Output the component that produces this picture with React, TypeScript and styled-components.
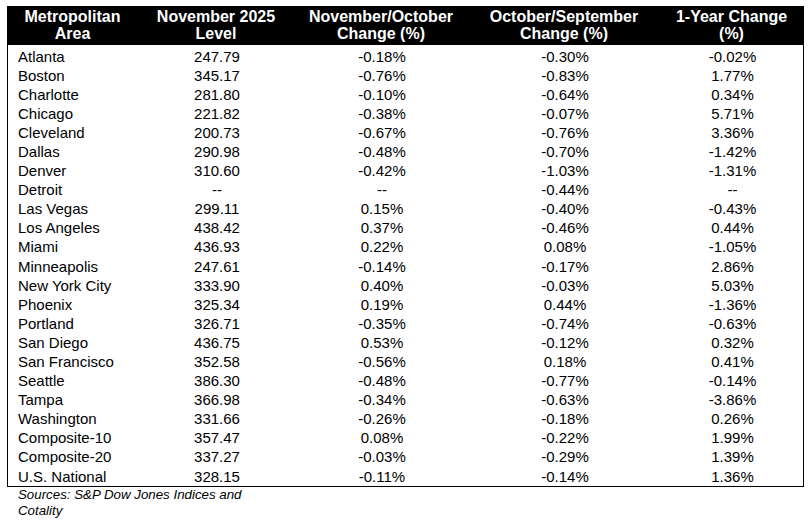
import styled, { createGlobalStyle } from "styled-components";

const GlobalStyle = createGlobalStyle`
  html, body {
    margin: 0;
    padding: 0;
    background: #fff;
  }
  body {
    font-family: "Liberation Sans", Arial, sans-serif;
    color: #000;
  }
`;

const COLUMNS = "131px 156px 174px 192px 143px";

const Page = styled.div`
  padding: 6px 0 0 7px;
  width: 797px;
`;

const HeaderRow = styled.div`
  display: grid;
  grid-template-columns: ${COLUMNS};
  background: #000;
  color: #fff;
  padding: 2px 0 3px;
`;

const HeaderCell = styled.div`
  font-size: 16px;
  font-weight: 700;
  line-height: 17px;
  text-align: center;
  white-space: nowrap;
`;

const Body = styled.div`
  border: 1px solid #000;
  border-top: none;
  padding: 1.5px 0 0;
`;

const Row = styled.div`
  display: grid;
  grid-template-columns: ${COLUMNS};
  height: 19.1px;
`;

const Cell = styled.div<{ $left?: boolean }>`
  font-size: 15px;
  line-height: 19.1px;
  text-align: ${(p) => (p.$left ? "left" : "center")};
  padding-left: ${(p) => (p.$left ? "10px" : "0")};
  white-space: nowrap;
`;

const Sources = styled.p`
  margin: 0;
  padding-left: 11px;
  width: 235px;
  font-size: 13.3px;
  line-height: 16px;
  font-style: italic;
`;

const headers: [string, string][] = [
  ["Metropolitan", "Area"],
  ["November 2025", "Level"],
  ["November/October", "Change (%)"],
  ["October/September", "Change (%)"],
  ["1-Year Change", "(%)"],
];

const rows: string[][] = [
  ["Atlanta", "247.79", "-0.18%", "-0.30%", "-0.02%"],
  ["Boston", "345.17", "-0.76%", "-0.83%", "1.77%"],
  ["Charlotte", "281.80", "-0.10%", "-0.64%", "0.34%"],
  ["Chicago", "221.82", "-0.38%", "-0.07%", "5.71%"],
  ["Cleveland", "200.73", "-0.67%", "-0.76%", "3.36%"],
  ["Dallas", "290.98", "-0.48%", "-0.70%", "-1.42%"],
  ["Denver", "310.60", "-0.42%", "-1.03%", "-1.31%"],
  ["Detroit", "--", "--", "-0.44%", "--"],
  ["Las Vegas", "299.11", "0.15%", "-0.40%", "-0.43%"],
  ["Los Angeles", "438.42", "0.37%", "-0.46%", "0.44%"],
  ["Miami", "436.93", "0.22%", "0.08%", "-1.05%"],
  ["Minneapolis", "247.61", "-0.14%", "-0.17%", "2.86%"],
  ["New York City", "333.90", "0.40%", "-0.03%", "5.03%"],
  ["Phoenix", "325.34", "0.19%", "0.44%", "-1.36%"],
  ["Portland", "326.71", "-0.35%", "-0.74%", "-0.63%"],
  ["San Diego", "436.75", "0.53%", "-0.12%", "0.32%"],
  ["San Francisco", "352.58", "-0.56%", "0.18%", "0.41%"],
  ["Seattle", "386.30", "-0.48%", "-0.77%", "-0.14%"],
  ["Tampa", "366.98", "-0.34%", "-0.63%", "-3.86%"],
  ["Washington", "331.66", "-0.26%", "-0.18%", "0.26%"],
  ["Composite-10", "357.47", "0.08%", "-0.22%", "1.99%"],
  ["Composite-20", "337.27", "-0.03%", "-0.29%", "1.39%"],
  ["U.S. National", "328.15", "-0.11%", "-0.14%", "1.36%"],
];

export default function App() {
  return (
    <>
      <GlobalStyle />
      <Page>
        <HeaderRow>
          {headers.map(([a, b]) => (
            <HeaderCell key={a}>
              {a}
              <br />
              {b}
            </HeaderCell>
          ))}
        </HeaderRow>
        <Body>
          {rows.map((r) => (
            <Row key={r[0]}>
              {r.map((v, i) => (
                <Cell key={i} $left={i === 0}>
                  {v}
                </Cell>
              ))}
            </Row>
          ))}
        </Body>
        <Sources>Sources: S&amp;P Dow Jones Indices and Cotality</Sources>
      </Page>
    </>
  );
}
